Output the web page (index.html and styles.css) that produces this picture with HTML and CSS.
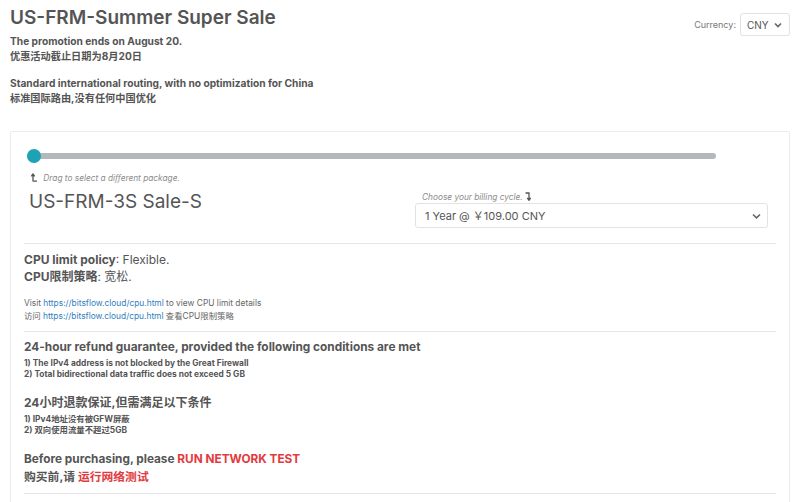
FILE: index.html
```html
<!DOCTYPE html>
<html>
<head>
  <meta charset="UTF-8">
  <meta name="viewport" content="width=device-width, initial-scale=1.0">
  <title>US-FRM-Summer Super Sale</title>
  <link rel="stylesheet" href="styles.css">
</head>
<body>
<div class="page">
  <div class="top">
    <div class="intro">
      <h1 class="title">US-FRM-Summer Super Sale</h1>
      <p class="note">The promotion ends on August 20.<br>优惠活动截止日期为8月20日</p>
      <p class="note">Standard international routing, with no optimization for China<br>标准国际路由,没有任何中国优化</p>
    </div>
    <div class="currency">
      <label for="currency">Currency:</label>
      <span class="select-wrap select-sm">
        <select id="currency">
          <option>CNY</option>
          <option>USD</option>
        </select>
        <svg class="chev" width="8" height="6" viewBox="0 0 8 6"><path d="M1 1.5 L4 4.5 L7 1.5" fill="none" stroke="#666" stroke-width="1.6"/></svg>
      </span>
    </div>
  </div>

  <div class="card">
    <input class="pkg-slider" type="range" min="0" max="5" value="0">
    <div class="hint">
      <svg class="hint-icon" width="7" height="9" viewBox="0 0 7 9"><path d="M2 8.5 V1.5 M0.3 3.3 L2 1 L3.7 3.3 M2 8.2 H6" fill="none" stroke="#555" stroke-width="1.3"/></svg>
      Drag to select a different package.
    </div>

    <div class="pkg-row">
      <div class="pkg-name">US-FRM-3S Sale-S</div>
      <div class="billing">
        <div class="hint billing-hint">Choose your billing cycle.
          <svg width="7" height="9" viewBox="0 0 7 9"><path d="M0.5 1 H4 V8 M2.3 5.8 L4 8.3 L5.7 5.8" fill="none" stroke="#555" stroke-width="1.3"/></svg>
        </div>
        <span class="select-wrap">
          <select id="billingcycle">
            <option>1 Year @ ￥109.00 CNY</option>
          </select>
          <svg class="chev" width="9" height="6" viewBox="0 0 9 6"><path d="M1 1.5 L4.5 4.8 L8 1.5" fill="none" stroke="#666" stroke-width="1.6"/></svg>
        </span>
      </div>
    </div>

    <div class="section cpu">
      <p class="policy"><b>CPU limit policy</b>: Flexible.<br><b>CPU限制策略</b>: 宽松.</p>
      <p class="visit">Visit <a href="#">https://bitsflow.cloud/cpu.html</a> to view CPU limit details<br>访问 <a href="#">https://bitsflow.cloud/cpu.html</a> 查看CPU限制策略</p>
    </div>

    <div class="section refund">
      <h3>24-hour refund guarantee, provided the following conditions are met</h3>
      <p class="cond">1) The IPv4 address is not blocked by the Great Firewall<br>2) Total bidirectional data traffic does not exceed 5 GB</p>
      <h3 class="cn">24小时退款保证,但需满足以下条件</h3>
      <p class="cond">1) IPv4地址没有被GFW屏蔽<br>2) 双向使用流量不超过5GB</p>
      <p class="test">Before purchasing, please <a href="#">RUN NETWORK TEST</a><br>购买前,请 <a href="#">运行网络测试</a></p>
    </div>

    <div class="section tail"></div>
  </div>
</div>
</body>
</html>
```

FILE: styles.css
```css
body {
  margin: 0;
  font-family: Inter, "Noto Sans CJK SC", sans-serif;
  color: #555;
  background: #fff;
}
.page {
  padding: 6px 10px 0;
}
.top {
  display: flex;
  justify-content: space-between;
  align-items: flex-start;
}
.title {
  margin: 0 0 4px;
  font-size: 19px;
  line-height: 24px;
  font-weight: 600;
  color: #555;
}
.note {
  margin: 0 0 12px;
  font-size: 10.2px;
  line-height: 15px;
  font-weight: 700;
}
.note:last-child {
  margin-bottom: 0;
}
.currency {
  display: flex;
  align-items: center;
  gap: 4px;
  margin-top: 7px;
  font-size: 9px;
  color: #777;
}
.select-wrap {
  position: relative;
  display: block;
}
.select-wrap select {
  appearance: none;
  -webkit-appearance: none;
  display: block;
  width: 100%;
  height: 25px;
  padding: 0 0 0 9px;
  border: 1px solid #e2e2e2;
  border-radius: 3px;
  background: #fff;
  font-family: inherit;
  font-size: 11px;
  color: #555;
}
.select-wrap .chev {
  position: absolute;
  right: 7px;
  top: 10px;
}
.select-sm {
  width: 50px;
}
.select-sm select {
  height: 23px;
  padding-left: 6px;
  font-size: 10px;
}
.select-sm .chev {
  right: 8px;
  top: 9px;
}
.card {
  margin-top: 25px;
  border: 1px solid #ebebeb;
  border-radius: 2px;
  padding: 17px 13px 20px;
}
.pkg-slider {
  -webkit-appearance: none;
  appearance: none;
  display: block;
  width: 689px;
  height: 14px;
  margin: 0 0 0 3px;
  background: transparent;
}
.pkg-slider::-webkit-slider-runnable-track {
  height: 6px;
  border-radius: 3px;
  background: #b3b8bc;
}
.pkg-slider::-webkit-slider-thumb {
  -webkit-appearance: none;
  width: 14px;
  height: 14px;
  margin-top: -4px;
  border-radius: 50%;
  background: #1ea2b6;
  border: none;
}
.hint {
  margin-top: 9px;
  font-size: 8.3px;
  line-height: 12px;
  font-style: italic;
  color: #8c8c8c;
}
.hint-icon {
  margin: 0 3px 0 7px;
  vertical-align: -1px;
}
.hint svg {
  vertical-align: -1px;
}
.pkg-row {
  display: flex;
  align-items: flex-start;
  margin-top: 7px;
}
.pkg-name {
  flex: 1;
  padding-left: 5px;
  font-size: 19px;
  line-height: 22px;
  color: #555;
}
.billing {
  width: 353px;
  margin-right: 8px;
}
.billing-hint {
  margin-top: 0;
  padding-left: 7px;
}
.section {
  border-top: 1px solid #e6e6e6;
}
.cpu {
  margin-top: 15px;
  padding: 7px 0 8px;
}
.policy {
  margin: 0;
  font-size: 12px;
  line-height: 17px;
}
.visit {
  margin: 12px 0 0;
  font-size: 8.4px;
  line-height: 13px;
  color: #666;
}
.visit a {
  color: #2f7dbd;
  text-decoration: none;
}
.refund {
  padding: 7px 0 7px;
}
.refund h3 {
  margin: 0;
  font-size: 11.85px;
  line-height: 16px;
  font-weight: 700;
}
.refund h3.cn {
  margin-top: 14px;
  font-size: 12px;
  line-height: 17px;
}
.cond {
  margin: 3px 0 0;
  font-size: 8.4px;
  line-height: 11px;
  font-weight: 700;
}
.test {
  margin: 14px 0 0;
  font-size: 11.8px;
  line-height: 18px;
  font-weight: 700;
}
.test a {
  color: #e23b3f;
  text-decoration: none;
}
.tail {
  height: 20px;
}
```
